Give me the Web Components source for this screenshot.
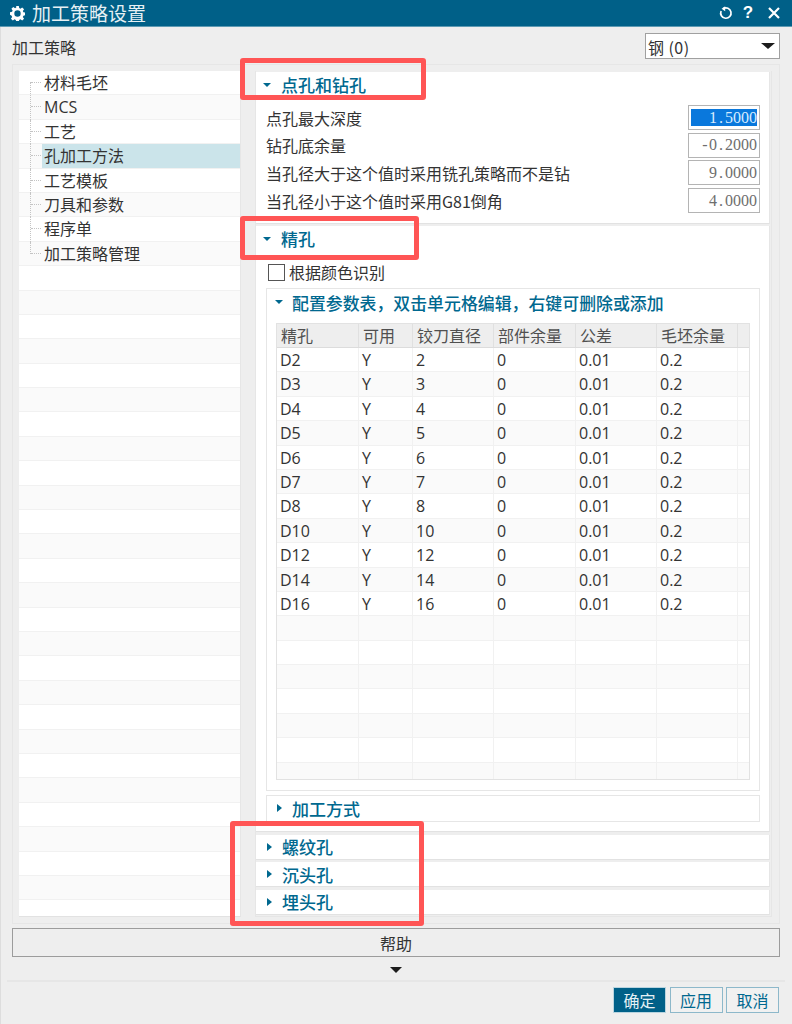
<!DOCTYPE html>
<html lang="zh">
<head>
<meta charset="utf-8">
<title>加工策略设置</title>
<style>
    html, body { margin: 0; padding: 0; background: #eee; }
    body { font-family: "Open Sans", "Noto Sans CJK SC", sans-serif; font-size: 16px; color: #333; }
</style>
</head>
<body>
<cam-dialog></cam-dialog>

<script>
const CJK = `"Noto Sans CJK SC", sans-serif`;

class TitleBar extends HTMLElement {
    constructor() {
        super();
        this.attachShadow({ mode: "open" });
        this.shadowRoot.innerHTML = `
            <style>
                :host {
                    display: flex; align-items: center; height: 26px; box-sizing: content-box;
                    background: #006088; color: #e6f0f4; border-bottom: 1px solid #5d9ab3;
                    font-family: ${CJK};
                }
                .gear { margin-left: 10px; width: 15px; height: 15px; }
                .name { margin-left: 7px; font-size: 19px; line-height: 26px; flex: 1; }
                .tools { display: flex; align-items: center; color: #fff; }
                .help { font: bold 17px/26px "Liberation Sans", sans-serif; width: 16px; text-align: center; margin: 0 12px 0 7px; }
                svg { display: block; }
            </style>
            <svg class="gear" viewBox="0 0 16 16">
                <path fill="#fff" fill-rule="evenodd" d="M6.6 0h2.8l.4 2.2 1.3.6 1.9-1.3 2 2-1.3 1.9.6 1.3 2.2.4v2.8l-2.2.4-.6 1.3 1.3 1.9-2 2-1.9-1.3-1.3.6-.4 2.2H6.6l-.4-2.2-1.3-.6-1.9 1.3-2-2 1.3-1.9-.6-1.3L0 9.4V6.6l2.2-.4.6-1.3-1.3-1.9 2-2 1.9 1.3 1.3-.6zM8 4.6a3.4 3.4 0 1 0 0 6.8 3.4 3.4 0 0 0 0-6.8z"/>
            </svg>
            <div class="name">加工策略设置</div>
            <div class="tools">
                <svg width="14" height="14" viewBox="0 0 14 14" fill="none">
                    <path d="M4.2 2.6A5.2 5.2 0 1 1 2.1 5" stroke="#fff" stroke-width="1.7"/>
                    <path d="M6.2 0.2v5L2.6 2.7z" fill="#fff"/>
                </svg>
                <div class="help">?</div>
                <svg width="12" height="12" viewBox="0 0 12 12" style="margin-right:12px">
                    <path d="M1 1l10 10M11 1L1 11" stroke="#fff" stroke-width="2.2"/>
                </svg>
            </div>
        `;
    }
}

class ComboBox extends HTMLElement {
    constructor() {
        super();
        this.attachShadow({ mode: "open" });
        this.shadowRoot.innerHTML = `
            <style>
                :host {
                    display: flex; align-items: center; justify-content: space-between;
                    width: 135px; height: 26px; box-sizing: border-box;
                    background: #fff; border: 1px solid #a0a0a0; padding: 0 4px 0 2px;
                    letter-spacing: 0.45px;
                }
                .text { padding-top: 3px; }
                .arrow { width: 0; height: 0; border: 7px solid transparent; border-top: 6px solid #1c1c1c; border-bottom: 0; margin-top: 1px; }
            </style>
            <span class="text"><slot></slot></span>
            <span class="arrow"></span>
        `;
    }
}

class TreeList extends HTMLElement {
    constructor() {
        super();
        this.attachShadow({ mode: "open" });
        const items = ["材料毛坯", "MCS", "工艺", "孔加工方法", "工艺模板", "刀具和参数", "程序单", "加工策略管理"];
        let rows = "";
        for (let i = 0; i < 35; i++) {
            const name = items[i] || "";
            let cls = i % 2 ? "row odd" : "row";
            if (i === 0) cls += " first";
            if (i === items.length - 1) cls += " last";
            const guide = name ? `<span class="guide"></span>` : "";
            const label = name ? `<span class="label${i === 3 ? " sel" : ""}">${name}</span>` : "";
            rows += `<div class="${cls}">${guide}${label}</div>`;
        }
        this.shadowRoot.innerHTML = `
            <style>
                :host {
                    display: block; width: 222px; height: 846px; overflow: hidden; flex: none;
                    background: #fff; border-bottom: 1px solid #e2e2e2; border-right: 1px solid #e6e6e6;
                    box-sizing: border-box;
                }
                .row {
                    height: 24.4px; box-sizing: border-box; display: flex; position: relative;
                    border-bottom: 1px solid #f1f1f1; line-height: 25px;
                }
                .odd { background: #fafafa; }
                .guide {
                    width: 11px; margin-left: 11px; flex: none; align-self: stretch; position: relative;
                    border-left: 1px dotted #c4c4c4; margin-bottom: -1px;
                }
                .guide::after {
                    content: ""; position: absolute; left: 0; top: 11px; width: 10px;
                    border-top: 1px dotted #c4c4c4;
                }
                .first .guide { margin-top: 11px; margin-bottom: 0; }
                .first .guide::after { top: 0; }
                .last .guide { align-self: flex-start; height: 12px; }
                .label { flex: 1; padding-left: 2px; }
                .sel { background: #cbe4ea; }
            </style>
            ${rows}
        `;
    }
}

class FoldSection extends HTMLElement {
    constructor() {
        super();
        this.attachShadow({ mode: "open" });
        this.shadowRoot.innerHTML = `
            <style>
                :host {
                    display: block; background: #fff; box-sizing: border-box;
                    border-bottom: 1px solid #e2e2e2; border-right: 1px solid #e6e6e6;
                }
                :host([nested]) { border: 1px solid #e6e6e6; }
                .head {
                    display: flex; align-items: center; height: var(--head-h, 25px); padding-left: var(--indent, 7px);
                    color: #00688f; font-family: ${CJK}; font-weight: 500;
                    font-size: var(--head-size, 17px); white-space: nowrap;
                }
                .tri { width: 0; height: 0; flex: none; }
                :host([open]) .tri {
                    border: 4.5px solid transparent; border-top: 4px solid #00688f; border-bottom: 0;
                    margin-right: var(--tri-gap, 10px);
                }
                :host(:not([open])) .tri {
                    border: 4.5px solid transparent; border-left: 5px solid #00688f; border-right: 0;
                    margin: 0 10px 0 4px;
                }
            </style>
            <div class="head"><span class="tri"></span><span id="title"></span></div>
            <slot></slot>
        `;
    }
    connectedCallback() {
        this.shadowRoot.querySelector("#title").textContent = this.getAttribute("title") || "";
    }
}

class NumField extends HTMLElement {
    constructor() {
        super();
        this.attachShadow({ mode: "open" });
        this.shadowRoot.innerHTML = `
            <style>
                :host {
                    display: flex; align-items: center; height: 25px; margin-bottom: 2.7px;
                    padding: 0 9px 0 10px; font-family: ${CJK}; white-space: nowrap;
                }
                .name { flex: 1; }
                .box {
                    width: 72px; height: 25px; box-sizing: border-box; border: 1px solid #b4b4b4;
                    display: flex; align-items: center; justify-content: flex-end; padding: 3px 2px;
                    font: 16px "Liberation Serif", serif; color: #6e6e6e;
                }
                .wide { display: inline-block; width: 8px; text-align: center; }
                :host([active]) #v { background: #0a78dc; color: #d8ecff; width: 100%; text-align: right; line-height: 17px; }
            </style>
            <span class="name"><slot></slot></span>
            <span class="box"><span id="v"></span></span>
        `;
    }
    connectedCallback() {
        const value = this.getAttribute("value") || "";
        this.shadowRoot.querySelector("#v").innerHTML =
            value.replace(/[.-]/g, c => `<span class="wide">${c}</span>`);
    }
}

class ParamTable extends HTMLElement {
    constructor() {
        super();
        this.attachShadow({ mode: "open" });
        const heads = ["精孔", "可用", "铰刀直径", "部件余量", "公差", "毛坯余量", ""];
        const sizes = [2, 3, 4, 5, 6, 7, 8, 10, 12, 14, 16];
        let body = `<div class="tr head">${heads.map(h => `<div class="td">${h}</div>`).join("")}</div>`;
        for (let i = 0; i < 18; i++) {
            const s = sizes[i];
            const cells = s ? ["D" + s, "Y", s, "0", "0.01", "0.2", ""] : ["", "", "", "", "", "", ""];
            body += `<div class="tr${i % 2 ? " odd" : ""}">${cells.map(c => `<div class="td">${c}</div>`).join("")}</div>`;
        }
        this.shadowRoot.innerHTML = `
            <style>
                :host {
                    display: block; margin: 0 9px; height: 457px; overflow: hidden;
                    border: 1px solid #e2e2e2; box-sizing: border-box; background: #fff;
                }
                .tr {
                    display: grid; grid-template-columns: 82px 54px 81px 82px 81px 81px 12px;
                    height: 24.4px; box-sizing: border-box; border-bottom: 1px solid #f1f1f1;
                    line-height: 25px;
                }
                .odd { background: #fafafa; }
                .td { border-right: 1px solid #f1f1f1; padding-left: 3px; overflow: hidden; white-space: nowrap; }
                .td:last-child { border-right: 0; padding: 0; }
                .head { background: #eee; border-bottom: 1px solid #dcdcdc; height: 24px; font-family: ${CJK}; color: #505050; line-height: 23px; }
                .head .td { border-right: 1px solid #e0e0e0; padding-left: 4px; }
            </style>
            ${body}
        `;
    }
}

class DialogButton extends HTMLElement {
    constructor() {
        super();
        this.attachShadow({ mode: "open" });
        this.shadowRoot.innerHTML = `
            <style>
                :host {
                    display: flex; align-items: center; justify-content: center;
                    width: 53px; height: 26px; box-sizing: border-box;
                    border: 1px solid #8db8ca; color: #00688f; background: #f1f1f1;
                    font-family: ${CJK};
                }
                :host([primary]) { background: #006088; color: #e4f0f5; border-color: #b9d4df; }
            </style>
            <slot></slot>
        `;
    }
}

class RedMark extends HTMLElement {
    constructor() {
        super();
        this.attachShadow({ mode: "open" });
        this.shadowRoot.innerHTML = `
            <style>
                :host {
                    display: block; position: absolute; box-sizing: border-box;
                    border: 5px solid #ff5555; border-radius: 3px; pointer-events: none;
                }
            </style>
        `;
    }
}

const dialogTemplate = document.createElement("template");
dialogTemplate.innerHTML = `
    <style>
        :host {
            display: flex; flex-direction: column; position: relative;
            width: 792px; height: 1024px; overflow: hidden; background: #eee;
            box-sizing: border-box; box-shadow: inset 1px 0 0 #ddd;
        }
        .strategy {
            display: flex; align-items: center; justify-content: space-between;
            height: 37px; padding: 0 12px; box-sizing: border-box; font-family: ${CJK};
        }
        .strategy > span { padding-top: 3px; }
        .panel {
            display: flex; gap: 14px; height: 860px; margin: 0 12px 0 12px; padding: 6px 6px 6px 6px;
            border: 1px solid #e6e6e6; box-sizing: border-box;
        }
        .right {
            width: 517px; height: 846px; box-sizing: border-box; padding: 1px 1px 0 0;
            border: 1px solid #e6e6e6; border-width: 0 1px 1px 1px;
            display: flex; flex-direction: column; gap: 2.5px; font-family: "Open Sans", ${CJK};
        }
        .s1 { height: 151.5px; }
        .s2 { height: 606px; }
        .s3 { height: 25px; --head-h: 24px; }
        .s1 num-field:first-of-type { margin-top: 8px; }
        .check {
            display: flex; align-items: center; height: 24px; padding-left: 12px; margin: 9px 0 4px;
            font-family: ${CJK};
        }
        .check i { width: 17px; height: 17px; box-sizing: border-box; border: 1.5px solid #555; background: #fff; margin-right: 4px; margin-top: 1px; }
        .sub { margin: 0 9px 4px 10px; height: 503px; --indent: 8px; --tri-gap: 9px; --head-size: 16.9px; --head-h: 26px; }
        .sub2 { margin: 0 9px 0 10px; height: 27px; --indent: 6px; --head-h: 24px; }
        .help {
            display: flex; align-items: center; justify-content: center;
            height: 29px; margin: 4px 12px 0; border: 1px solid #9c9c9c; box-sizing: border-box;
            font-family: ${CJK};
        }
        .more { height: 23px; display: flex; align-items: center; justify-content: center; padding-top: 3px; box-sizing: border-box; }
        .more span { width: 0; height: 0; border: 6.5px solid transparent; border-top: 6px solid #1c1c1c; border-bottom: 0; }
        .sep { height: 2px; background: #e6e6e6; margin: 0 7px; }
        .foot { display: flex; justify-content: flex-end; gap: 3.5px; padding: 5px 13px 0 0; }
        .tablewrap { padding-top: 8px; }
    </style>
    <title-bar></title-bar>
    <div class="strategy"><span>加工策略</span><combo-box>钢 (0)</combo-box></div>
    <div class="panel">
        <tree-list></tree-list>
        <div class="right">
            <fold-section class="s1" open title="点孔和钻孔">
                <num-field value="1.5000" active>点孔最大深度</num-field>
                <num-field value="-0.2000">钻孔底余量</num-field>
                <num-field value="9.0000">当孔径大于这个值时采用铣孔策略而不是钻</num-field>
                <num-field value="4.0000">当孔径小于这个值时采用G81倒角</num-field>
            </fold-section>
            <fold-section class="s2" open title="精孔">
                <div class="check"><i></i>根据颜色识别</div>
                <fold-section class="sub" open nested title="配置参数表，双击单元格编辑，右键可删除或添加">
                    <div class="tablewrap"><param-table></param-table></div>
                </fold-section>
                <fold-section class="sub2" nested title="加工方式"></fold-section>
            </fold-section>
            <fold-section class="s3" title="螺纹孔"></fold-section>
            <fold-section class="s3" title="沉头孔"></fold-section>
            <fold-section class="s3" title="埋头孔"></fold-section>
        </div>
    </div>
    <div class="help">帮助</div>
    <div class="more"><span></span></div>
    <div class="sep"></div>
    <div class="foot">
        <dialog-button primary>确定</dialog-button>
        <dialog-button>应用</dialog-button>
        <dialog-button>取消</dialog-button>
    </div>
    <red-mark style="left:240px;top:58px;width:186px;height:42px"></red-mark>
    <red-mark style="left:240px;top:216px;width:179px;height:44px"></red-mark>
    <red-mark style="left:230px;top:821px;width:194px;height:105px"></red-mark>
`;

class CamDialog extends HTMLElement {
    constructor() {
        super();
        this.attachShadow({ mode: "open" });
        this.shadowRoot.appendChild(dialogTemplate.content.cloneNode(true));
    }
}

customElements.define("title-bar", TitleBar);
customElements.define("combo-box", ComboBox);
customElements.define("tree-list", TreeList);
customElements.define("fold-section", FoldSection);
customElements.define("num-field", NumField);
customElements.define("param-table", ParamTable);
customElements.define("dialog-button", DialogButton);
customElements.define("red-mark", RedMark);
customElements.define("cam-dialog", CamDialog);
</script>
</body>
</html>
